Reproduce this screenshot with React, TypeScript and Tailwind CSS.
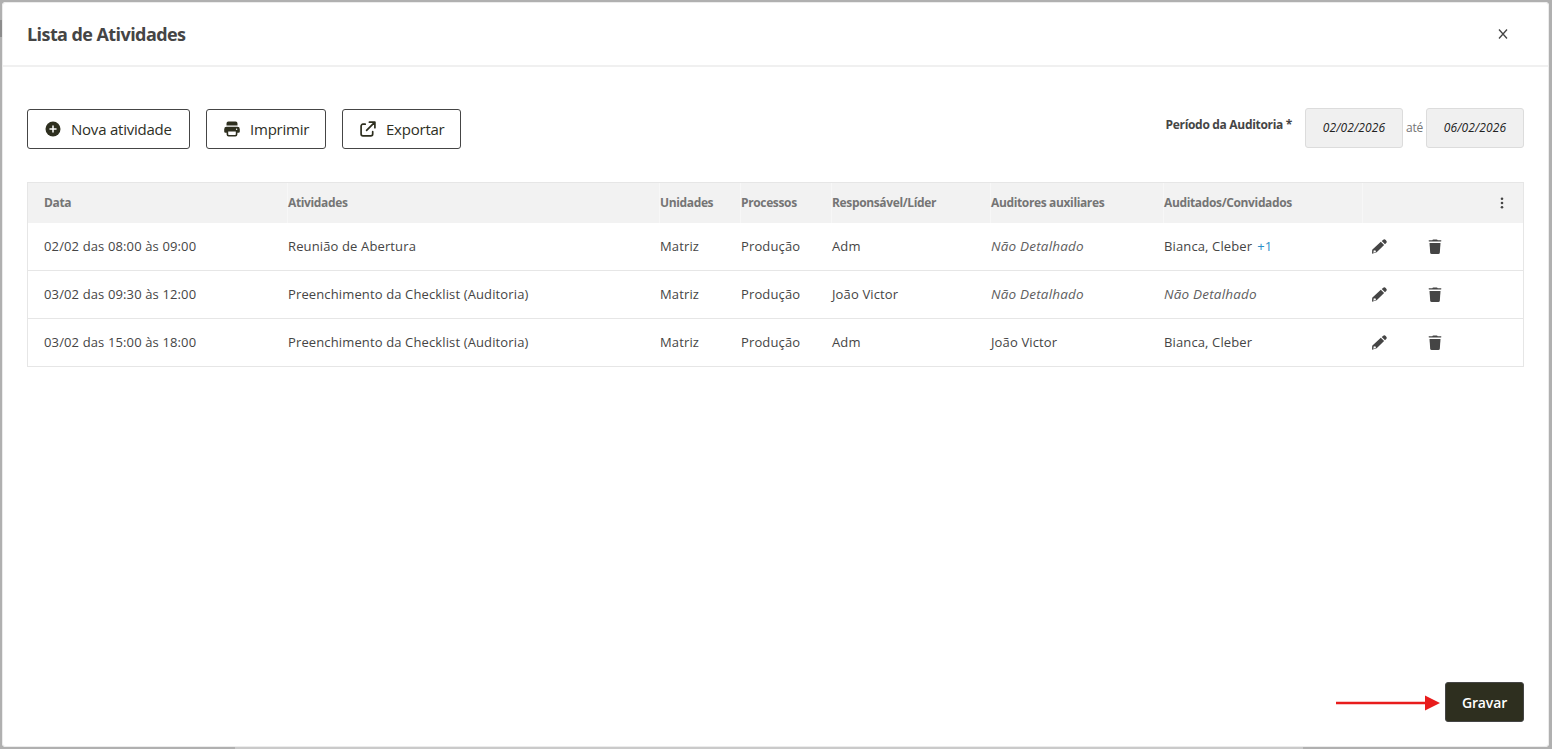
import type { ReactNode } from 'react';

const columns = [
  'Data',
  'Atividades',
  'Unidades',
  'Processos',
  'Responsável/Líder',
  'Auditores auxiliares',
  'Auditados/Convidados',
];

const activities = [
  {
    date: '02/02 das 08:00 às 09:00',
    name: 'Reunião de Abertura',
    unit: 'Matriz',
    process: 'Produção',
    leader: 'Adm',
    auditors: '',
    guests: 'Bianca, Cleber',
    extra: '+1',
  },
  {
    date: '03/02 das 09:30 às 12:00',
    name: 'Preenchimento da Checklist (Auditoria)',
    unit: 'Matriz',
    process: 'Produção',
    leader: 'João Victor',
    auditors: '',
    guests: '',
    extra: '',
  },
  {
    date: '03/02 das 15:00 às 18:00',
    name: 'Preenchimento da Checklist (Auditoria)',
    unit: 'Matriz',
    process: 'Produção',
    leader: 'Adm',
    auditors: 'João Victor',
    guests: 'Bianca, Cleber',
    extra: '',
  },
];

const GRID =
  'grid grid-cols-[244px_372px_81px_91px_159px_173px_199px_56px_1fr] pl-4';

function PlusIcon() {
  return (
    <svg width="16" height="16" viewBox="0 0 16 16">
      <circle cx="8" cy="8" r="7.5" fill="#2e2f1f" />
      <path d="M8 5v6M5 8h6" stroke="#fff" strokeWidth="1.5" strokeLinecap="round" />
    </svg>
  );
}

function PrintIcon() {
  return (
    <svg width="16" height="16" viewBox="0 0 16 16" fill="#2e2f1f">
      <path d="M4.4.5h7.2A1.9 1.9 0 0 1 13.5 2.4V4.5h-11V2.4A1.9 1.9 0 0 1 4.4.5z" />
      <path
        fillRule="evenodd"
        d="M2.6 5.8h10.8A2.4 2.4 0 0 1 15.8 8.2v2.2a1.3 1.3 0 0 1-1.3 1.3h-1.1v1.8a2 2 0 0 1-2 2H4.6a2 2 0 0 1-2-2v-1.8H1.5A1.3 1.3 0 0 1 .2 10.4V8.2a2.4 2.4 0 0 1 2.4-2.4zM4.2 10.6v2.7q0 .7.7.7h6.2q.7 0 .7-.7v-2.7z"
      />
      <circle cx="12.6" cy="8.3" r=".7" fill="#fff" />
    </svg>
  );
}

function ExportIcon() {
  return (
    <svg
      width="16"
      height="16"
      viewBox="0 0 16 16"
      fill="none"
      stroke="#2e2f1f"
      strokeWidth="1.7"
      strokeLinecap="round"
      strokeLinejoin="round"
    >
      <path d="M5.2 3.2H3A1.9 1.9 0 0 0 1.1 5.1v7.8A1.9 1.9 0 0 0 3 14.8h7.8a1.9 1.9 0 0 0 1.9-1.9v-2.2" />
      <path d="M6.6 9.4 14.6 1.3M9.4 1.2h5.5v5.5" />
    </svg>
  );
}

function PencilIcon() {
  return (
    <svg width="16" height="16" viewBox="0 0 16 16" fill="#454545">
      <path d="M10.7 2 12 .9a2 2 0 0 1 2.7.1l.4.4a2 2 0 0 1 .1 2.7L14 5.3z" />
      <path
        fillRule="evenodd"
        d="M9.8 2.8 13.1 6.1 5.7 13.3 1 14.8 1.2 10.8zM2.8 11.3l-.5 2.4 2.4-.6.3-1.3-1-.2z"
      />
    </svg>
  );
}

function TrashIcon() {
  return (
    <svg width="14" height="16" viewBox="0 0 14 16" fill="#454545">
      <path d="M4.3 1.2Q4.5.5 5.3.5h3.4q.8 0 1 .7h3.2q.5 0 .5.6t-.5.6H1.1q-.5 0-.5-.6t.5-.6z" />
      <path d="M1.5 3.9h11l-.7 9.8q-.1 1.3-1.4 1.3H3.6q-1.3 0-1.4-1.3z" />
    </svg>
  );
}

function ToolButton({ icon, width, children }: { icon: ReactNode; width: string; children: ReactNode }) {
  return (
    <button
      className={`${width} flex h-10 items-center gap-[10px] whitespace-nowrap rounded-[3px] border border-[#454545] bg-white pl-[17px] text-[15px] font-medium tracking-[-0.015em] text-[#2e2f1f]`}
    >
      {icon}
      {children}
    </button>
  );
}

function Cell({ value, children }: { value: string; children?: ReactNode }) {
  return (
    <div className="whitespace-nowrap">
      {value || <em className="text-[13.5px] tracking-[0.015em] text-[#606060]">Não Detalhado</em>}
      {children}
    </div>
  );
}

function ActivitiesTable() {
  return (
    <div className="mt-[33px] border border-[#e6e6e6] text-[13px] tracking-[0.01em] text-[#454545]">
      <div className={`${GRID} h-10 bg-[#f2f2f2] text-[12px] font-bold leading-10 tracking-[-0.03em] text-[#757575]`}>
        {columns.map((col) => (
          <div key={col} className="-ml-px border-l border-[#f7f7f7] first:border-transparent">
            {col}
          </div>
        ))}
        <div className="-ml-px border-l border-[#f7f7f7]" />
        <div className="flex items-center justify-end pr-[19px]">
          <svg width="4" height="12" viewBox="0 0 4 12" fill="#454545">
            <circle cx="2" cy="1.7" r="1.3" />
            <circle cx="2" cy="6" r="1.3" />
            <circle cx="2" cy="10.3" r="1.3" />
          </svg>
        </div>
      </div>

      {activities.map((item) => (
        <div key={item.date} className={`${GRID} h-12 items-center border-b border-[#e6e6e6] last:h-[47px] last:border-b-0`}>
          <Cell value={item.date} />
          <Cell value={item.name} />
          <Cell value={item.unit} />
          <Cell value={item.process} />
          <Cell value={item.leader} />
          <Cell value={item.auditors} />
          <Cell value={item.guests}>
            {item.extra && <span className="ml-[5px] text-[#2a8fc8]">{item.extra}</span>}
          </Cell>
          <div className="pl-2">
            <PencilIcon />
          </div>
          <div className="pl-[9px]">
            <TrashIcon />
          </div>
        </div>
      ))}
    </div>
  );
}

function DateField({ value }: { value: string }) {
  return (
    <div className="flex h-10 w-[98px] items-center justify-center rounded-[3px] border border-[#dcdcdc] bg-[#f0f0f0] text-[12px] italic tracking-[0.01em] text-[#222]">
      {value}
    </div>
  );
}

export default function App() {
  return (
    <div className="relative h-[749px] w-[1552px] bg-[#b0b0b0] pl-0.5 pt-0.5 font-['Open_Sans','Noto_Sans',sans-serif]">
      {/* Page edges showing behind the modal */}
      <div className="absolute left-0 top-5 h-[17px] w-0.5 bg-[#8c8c8c]" />
      <div className="absolute bottom-0 left-[235px] h-0.5 w-[1068px] bg-[#cacaca]" />

      <div className="flex h-[745px] w-[1547px] flex-col rounded bg-white shadow-[inset_0_0_0_1px_#ececec]">
        {/* Header */}
        <header className="mx-px flex h-[65px] shrink-0 items-center justify-between border-b-2 border-[#f0f0f0] pl-6 pr-[39px] pt-px">
          <h1 className="text-[18px] font-bold tracking-[-0.032em] text-[#454545]">Lista de Atividades</h1>
          <button className="flex h-4 w-3 items-center justify-center" aria-label="Fechar">
            <svg width="10" height="10" viewBox="0 0 10 10" stroke="#454545" strokeWidth="1.3">
              <path d="M1 .5 9 9.5M9 .5 1 9.5" />
            </svg>
          </button>
        </header>

        <main className="flex grow flex-col pl-[25px] pr-[25px] pt-[41px]">
          {/* Toolbar */}
          <div className="flex items-start justify-between">
            <div className="mt-px flex gap-4">
              <ToolButton icon={<PlusIcon />} width="w-[163px]">Nova atividade</ToolButton>
              <ToolButton icon={<PrintIcon />} width="w-[120px]">Imprimir</ToolButton>
              <ToolButton icon={<ExportIcon />} width="w-[119px]">Exportar</ToolButton>
            </div>
            <div className="flex items-center">
              <span className="mb-[6px] mr-[13px] text-[12px] font-bold tracking-[-0.026em] text-[#454545]">Período da Auditoria *</span>
              <DateField value="02/02/2026" />
              <span className="w-[23px] text-center text-[12px] tracking-[-0.02em] text-[#757575]">até</span>
              <DateField value="06/02/2026" />
            </div>
          </div>

          <ActivitiesTable />

          {/* Footer */}
          <div className="mb-[25px] mt-auto flex items-center justify-end gap-[5px]">
            <svg className="mt-0.5" width="104" height="16" viewBox="0 0 104 16" fill="#e81c1c">
              <path d="M0 6.7h89V.5L104 8 89 15.5V9.3H0z" />
            </svg>
            <button className="h-10 w-[79px] rounded-[3px] border border-[#454545] bg-[#2e2f1f] text-[14px] font-semibold tracking-[-0.01em] text-white">
              Gravar
            </button>
          </div>
        </main>
      </div>
    </div>
  );
}
